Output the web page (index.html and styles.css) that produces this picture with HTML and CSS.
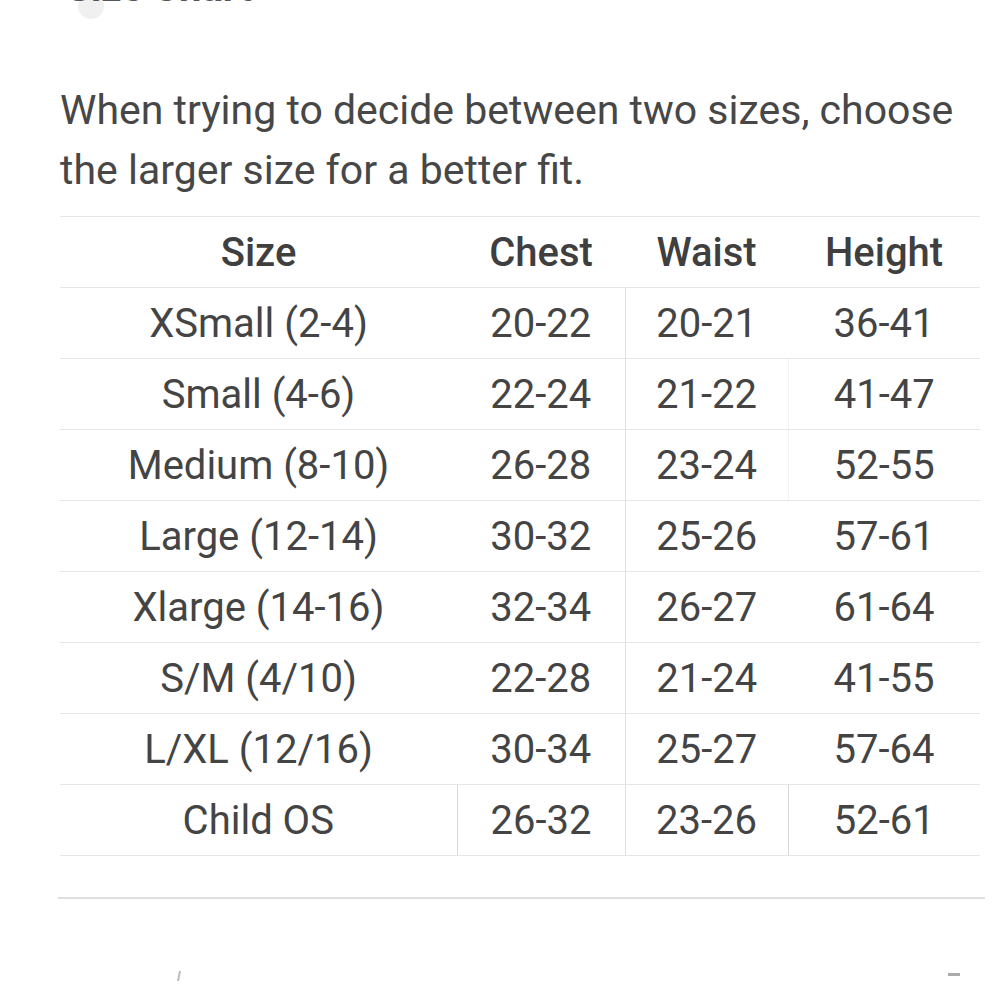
FILE: index.html
```html
<!DOCTYPE html>
<html>
<head>
<meta charset="utf-8">
<link rel="stylesheet" href="styles.css">
</head>
<body>
<div class="page">
  <div class="title-wrap">
    <span class="ripple"></span>
    <h2 class="title">Size Chart</h2>
  </div>
  <p class="intro">When trying to decide between two sizes, choose the larger size for a better fit.</p>
  <table class="chart">
    <thead>
      <tr><th>Size</th><th>Chest</th><th>Waist</th><th>Height</th></tr>
    </thead>
    <tbody>
      <tr><td>XSmall (2-4)</td><td>20-22</td><td class="mid">20-21</td><td>36-41</td></tr>
      <tr><td>Small (4-6)</td><td>22-24</td><td class="mid">21-22</td><td class="soft">41-47</td></tr>
      <tr><td>Medium (8-10)</td><td>26-28</td><td class="mid">23-24</td><td class="soft">52-55</td></tr>
      <tr><td>Large (12-14)</td><td>30-32</td><td class="mid">25-26</td><td>57-61</td></tr>
      <tr><td>Xlarge (14-16)</td><td>32-34</td><td class="mid">26-27</td><td>61-64</td></tr>
      <tr><td>S/M (4/10)</td><td>22-28</td><td class="mid">21-24</td><td>41-55</td></tr>
      <tr><td>L/XL (12/16)</td><td>30-34</td><td class="mid">25-27</td><td>57-64</td></tr>
      <tr class="last"><td>Child OS</td><td class="boxed">26-32</td><td class="mid">23-26</td><td class="boxed">52-61</td></tr>
    </tbody>
  </table>
  <hr class="rule">
  <div class="marks"><span class="mark-a"></span><span class="mark-b"></span></div>
</div>
</body>
</html>
```
FILE: styles.css
```css
html, body {
  margin: 0;
  padding: 0;
  background: #fff;
}
body {
  font-family: Roboto, "Noto Sans", "Liberation Sans", sans-serif;
  color: #444;
  overflow: hidden;
}
.page {
  width: 1000px;
  height: 1000px;
  overflow: hidden;
}
.title-wrap {
  position: relative;
  display: flow-root;
  height: 10px;
}
.title {
  position: relative;
  z-index: 1;
  margin: -32px 0 0 66px;
  font-size: 40px;
  line-height: 40px;
  font-weight: 700;
  color: #555;
}
.ripple {
  position: absolute;
  left: 78px;
  top: -7px;
  width: 26px;
  height: 26px;
  border-radius: 50%;
  background: #f0f0f0;
}
.intro {
  margin: 70px 30px 0 60px;
  font-size: 41px;
  line-height: 60px;
  color: #474747;
}
.chart {
  margin: 16px 0 0 60px;
  width: 920px;
  border-collapse: collapse;
  table-layout: fixed;
}
.chart th, .chart td {
  height: 70px;
  padding: 0;
  text-align: center;
  font-size: 40px;
  font-weight: 400;
  border-top: 1px solid #e6e6e6;
  border-bottom: 1px solid #e6e6e6;
}
.chart th {
  font-weight: 500;
  color: #3f3f3f;
}
.chart th:nth-child(1), .chart td:nth-child(1) { width: 397px; }
.chart th:nth-child(2), .chart td:nth-child(2) { width: 168px; }
.chart th:nth-child(3), .chart td:nth-child(3) { width: 163px; }
.chart td.mid {
  border-left: 1px solid #e0e0e0;
}
.chart td.soft {
  border-left: 1px solid #f2f2f2;
}
.chart tr.last td.boxed {
  border-left: 1px solid #d8d8d8;
}
.rule {
  margin: 41px 15px 0 58px;
  border: 0;
  border-top: 2px solid #dedede;
  height: 0;
}
.marks {
  display: flex;
  justify-content: space-between;
  margin: 72px 40px 0 178px;
}
.mark-a {
  width: 2px;
  height: 10px;
  background: #bbb;
  transform: skewX(-12deg);
}
.mark-b {
  width: 12px;
  height: 3px;
  margin-top: 2px;
  background: #aaa;
}
```
